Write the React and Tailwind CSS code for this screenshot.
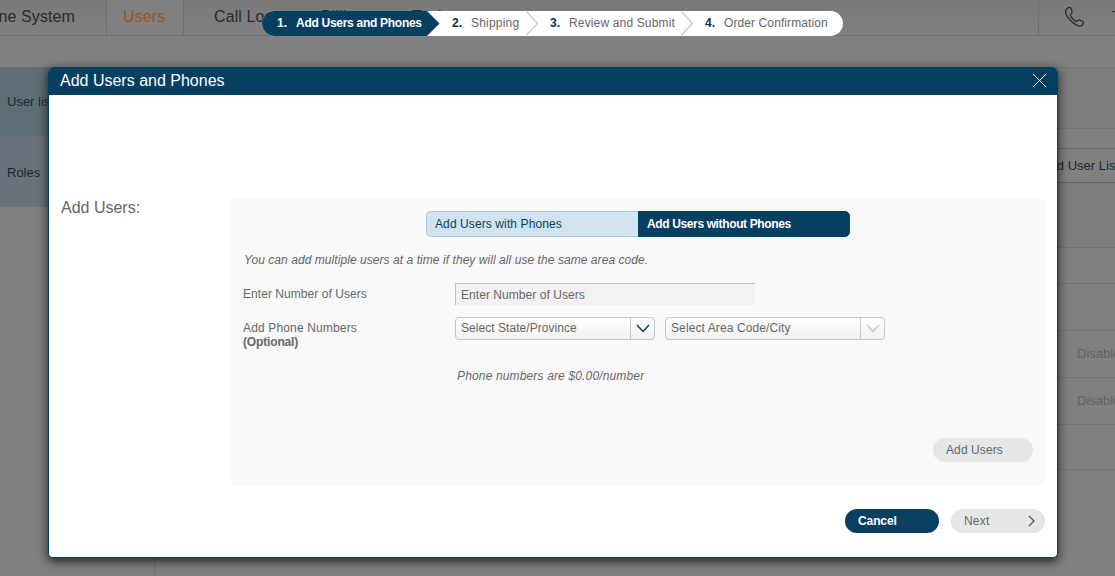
import React from "react";

function PageHeader() {
  return (
    <header className="flex h-9 shrink-0 border-b border-[#6f6f6f] bg-linear-to-b from-[#797979] to-[#808080] text-base leading-[34px] text-[#2b2b2b]">
      <div className="flex w-[107px] shrink-0 justify-end border-r border-[#6f6f6f] pr-[31px]">
        <span className="whitespace-nowrap">Phone System</span>
      </div>
      <div className="w-[77px] shrink-0 border-r border-[#6f6f6f] bg-[#808080] pl-4 text-[#9a5426]">Users</div>
      <div className="w-[137px] shrink-0 pl-[30px]">Call Logs</div>
      <div className="w-[91px] shrink-0">Billing</div>
      <div className="grow">Tools</div>
      <div className="flex w-[77px] shrink-0 items-center overflow-hidden border-l border-[#6f6f6f] pl-[25px]">
        <svg className="mt-[-2px] shrink-0" width="22" height="22" viewBox="0 0 22 22" fill="none" stroke="#262626" strokeWidth="1.200" strokeLinejoin="round">
          <path d="M6.3 1.6C4.7 1 1.7 2.5 1.6 5.2C1.5 8.300 4 12 6.600 14.500C9.500 17.300 13.200 20 15.700 20C17.600 20 19.600 18.200 19.500 16.800C19.400 15.600 16.500 14 15.200 14C13.900 14 13.100 15.600 12 15.300C10.500 14.900 6.800 11 6.400 9.700C6.100 8.600 7.900 7.700 8 6.500C8.100 5.100 7.500 2 6.300 1.600Z" />
        </svg>
        <span className="ml-[26px]">Tom</span>
      </div>
    </header>
  );
}

function PageBody() {
  return (
    <div className="mt-[31px] flex h-[509px] text-[13px] tracking-normal text-[#1c2831]">
      <aside className="w-[155px] shrink-0 border-r border-[#737373]">
        <div className="flex h-[69px] items-center bg-[#5f6e75] pl-[7px]">User list</div>
        <div className="flex h-[71px] items-center bg-[#69727a] pt-[2px] pl-[7px]">Roles</div>
      </aside>
      <main className="flex grow flex-col border-t border-[#737373]">
        <div className="h-[61px] shrink-0 border-b border-[#737373] bg-[#7d7d7d]" />
        <div className="mt-[19px] flex h-[35px] shrink-0 items-center justify-end overflow-hidden border-y border-[#676767] bg-[#808080]">
          <span className="mr-[-4px] whitespace-nowrap">Download User List</span>
        </div>
        <div className="h-[65px] shrink-0 border-b border-[#737373] bg-[#7d7d7d]" />
        <div className="h-9 shrink-0 border-b border-[#737373]" />
        <div className="h-[47px] shrink-0 border-b border-[#737373]" />
        <div className="flex h-[47px] shrink-0 items-center justify-end overflow-hidden border-b border-[#737373] text-[#626262]">
          <span className="w-[38px]">Disabled</span>
        </div>
        <div className="flex h-[47px] shrink-0 items-center justify-end overflow-hidden border-b border-[#737373] text-[#626262]">
          <span className="w-[38px]">Disabled</span>
        </div>
        <div className="h-[45px] shrink-0 border-b border-[#737373]" />
      </main>
    </div>
  );
}

function StepArrow() {
  return (
    <svg className="shrink-0" width="12" height="25" viewBox="0 0 12 25" fill="none" stroke="#b9c9d2" strokeWidth="1.200">
      <path d="M0.500 0.500L11.500 12.500L0.500 24" />
    </svg>
  );
}

function Steps() {
  return (
    <nav className="absolute top-[11px] left-[262px] flex h-[25px] w-[581px] overflow-hidden rounded-full bg-white leading-6 whitespace-nowrap text-[#666]">
      <div className="flex w-[165px] shrink-0 bg-[#073f61] pl-[15px] font-bold text-white">
        <span className="w-[19px] shrink-0">1.</span>
        <span className="tracking-[-0.28px]">Add Users and Phones</span>
      </div>
      <svg className="shrink-0" width="13" height="25" viewBox="0 0 13 25" fill="#073f61">
        <path d="M0 0L12.500 12.500L0 25Z" />
      </svg>
      <div className="flex w-[86px] shrink-0 pl-3">
        <b className="w-[19px] text-[#073652]">2.</b>
        <span className="tracking-[0.2px]">Shipping</span>
      </div>
      <StepArrow />
      <div className="flex w-[143px] shrink-0 pl-3">
        <b className="w-[19px] text-[#073652]">3.</b>
        <span className="tracking-[0.15px]">Review and Submit</span>
      </div>
      <StepArrow />
      <div className="flex grow pl-3">
        <b className="w-[19px] text-[#073652]">4.</b>
        <span>Order Confirmation</span>
      </div>
    </nav>
  );
}

function Dropdown({ label, className, stroke }) {
  return (
    <div className={"flex h-[23px] overflow-hidden rounded-[4px] border border-[#c8c8c8] bg-linear-to-b from-white to-[#f1f1f1] leading-5 " + className}>
      <span className="grow pl-[5px]">{label}</span>
      <span className="flex w-6 shrink-0 items-center justify-center border-l border-[#c8c8c8]">
        <svg width="14" height="9" viewBox="0 0 14 9" fill="none" stroke={stroke} strokeWidth="1.500">
          <path d="M1 1L7 7.500L13 1" />
        </svg>
      </span>
    </div>
  );
}

function AddUsersForm() {
  return (
    <section className="flex h-[286px] w-[814px] flex-col bg-[#f9f9f9]">
      <div className="mt-3 ml-[195px] flex h-[26px] w-[424px] shrink-0 leading-6">
        <button className="w-[212px] rounded-l-[5px] border border-r-0 border-[#a9cbd9] bg-[#d0e3ee] pl-2 text-left text-[#073f61]">Add Users with Phones</button>
        <button className="w-[212px] rounded-r-[5px] border border-[#073f61] bg-[#073f61] pl-[8px] text-left font-bold tracking-[-0.37px] text-white">Add Users without Phones</button>
      </div>
      <p className="mt-[15px] ml-[13px] h-4 leading-4 tracking-[0.06px] italic">You can add multiple users at a time if they will all use the same area code.</p>
      <div className="mt-[15px] flex h-[22px] pl-3">
        <label className="w-[212px] shrink-0 leading-[23px] tracking-[0.05px]">Enter Number of Users</label>
        <div className="w-[300px] border-t border-l border-[#c4c4c4] bg-[#f4f1f2] pl-[5px] leading-[22px] tracking-[0.05px]">Enter Number of Users</div>
      </div>
      <div className="mt-3 flex h-8 items-start pl-3">
        <label className="w-[212px] shrink-0 pt-[4px] leading-[14px] tracking-[0.15px]">
          Add Phone Numbers
          <b className="block tracking-[-0.15px]">(Optional)</b>
        </label>
        <Dropdown label="Select State/Province" className="w-[200px] tracking-[0.05px]" stroke="#073f61" />
        <Dropdown label="Select Area Code/City" className="ml-[10px] w-[220px] tracking-[0.1px]" stroke="#c8c8c8" />
      </div>
      <p className="mt-[19px] ml-[226px] h-4 leading-4 tracking-[0.15px] italic">Phone numbers are $0.00/number</p>
      <button className="mt-[54px] mr-3 h-6 w-[100px] shrink-0 self-end rounded-full bg-[#e4e6e7] pl-[13px] text-left leading-6">Add Users</button>
    </section>
  );
}

function Dialog() {
  return (
    <div className="absolute top-[67px] left-12 flex h-[491px] w-[1010px] flex-col overflow-hidden rounded-[5px] border border-t-0 border-[#073f61] bg-white shadow-[0_3px_10px_1px_rgba(0,0,0,0.65)]">
      <div className="flex h-7 shrink-0 items-start justify-between bg-[#073f61] pr-[10px] pl-[11px] text-base tracking-normal text-white">
        <h1 className="leading-7">Add Users and Phones</h1>
        <svg className="mt-[6px]" width="15" height="15" viewBox="0 0 15 15" stroke="white" strokeWidth="1">
          <path d="M1 1L14 14M14 1L1 14" />
        </svg>
      </div>
      <div className="mt-[104px] flex pl-3">
        <h2 className="w-[170px] shrink-0 text-base leading-[18px] tracking-normal">Add Users:</h2>
        <AddUsersForm />
      </div>
      <div className="mt-6 flex justify-end gap-3 pr-3 leading-6">
        <button className="h-6 w-[94px] rounded-full bg-[#0b3f61] pl-[13px] text-left font-bold tracking-[-0.1px] text-white">Cancel</button>
        <button className="flex h-6 w-[94px] items-center justify-between rounded-full bg-[#e4e6e7] pr-[10px] pl-[13px] tracking-[0.2px]">
          Next
          <svg width="7" height="12" viewBox="0 0 7 12" fill="none" stroke="#555" strokeWidth="1.300">
            <path d="M1 1L6 6L1 11" />
          </svg>
        </button>
      </div>
    </div>
  );
}

export default function App() {
  return (
    <div className="relative h-[576px] w-[1115px] overflow-hidden bg-[#808080] font-['Liberation_Sans',Arial,sans-serif] text-xs tracking-[0.1px] text-[#666]">
      <PageHeader />
      <PageBody />
      <Steps />
      <Dialog />
    </div>
  );
}
